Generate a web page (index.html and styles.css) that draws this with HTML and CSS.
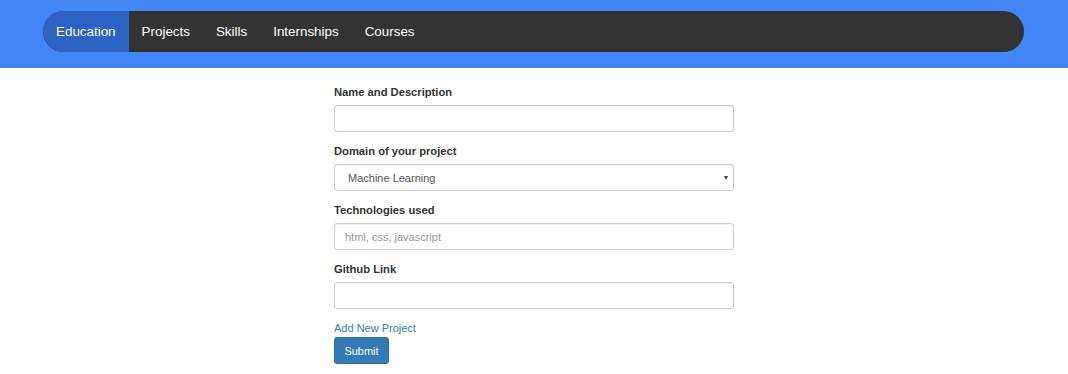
FILE: index.html
```html
<!DOCTYPE html>
<html lang="en">
<head>
    <meta charset="UTF-8">
    <meta name="viewport" content="width=device-width, initial-scale=1.0">
    <title>Projects</title>
    <link rel="stylesheet" href="styles.css">
</head>
<body>
    <header class="top">
        <nav class="navbar">
            <a class="nav-item active" href="#">Education</a>
            <a class="nav-item" href="#">Projects</a>
            <a class="nav-item" href="#">Skills</a>
            <a class="nav-item" href="#">Internships</a>
            <a class="nav-item" href="#">Courses</a>
        </nav>
    </header>
    <form class="project-form">
        <div class="form-group">
            <label for="name">Name and Description</label>
            <input type="text" id="name" class="form-control">
        </div>
        <div class="form-group">
            <label for="domain">Domain of your project</label>
            <div class="select-wrap">
                <select id="domain" class="form-control select">
                    <option>Machine Learning</option>
                    <option>Web Development</option>
                    <option>Android</option>
                </select>
                <span class="caret"></span>
            </div>
        </div>
        <div class="form-group">
            <label for="tech">Technologies used</label>
            <input type="text" id="tech" class="form-control" placeholder="html, css, javascript">
        </div>
        <div class="form-group">
            <label for="github">Github Link</label>
            <input type="text" id="github" class="form-control">
        </div>
        <a class="add-link" href="#">Add New Project</a>
        <button type="submit" class="btn">Submit</button>
    </form>
</body>
</html>
```

FILE: styles.css
```css
body {
    margin: 0;
    font-family: "Liberation Sans", Arial, sans-serif;
    background-color: white;
    color: #333;
}
.top {
    background-color: #4285f4;
    padding: 11px 44px 16px 43px;
}
.navbar {
    display: flex;
    height: 41px;
    background-color: #333;
    border-radius: 21px;
    overflow: hidden;
}
.nav-item {
    display: flex;
    align-items: center;
    padding: 0 13px;
    font-size: 13.4px;
    color: white;
    text-decoration: none;
}
.nav-item.active {
    background-color: #2b63c3;
}
.project-form {
    width: 400px;
    margin: 17px auto 0;
    display: flex;
    flex-direction: column;
    align-items: flex-start;
}
.form-group {
    width: 100%;
    margin-bottom: 12px;
}
label {
    display: block;
    font-size: 11.2px;
    font-weight: bold;
    line-height: 14px;
    margin-bottom: 6px;
    color: #333;
}
.form-control {
    display: block;
    box-sizing: border-box;
    width: 100%;
    height: 27px;
    margin: 0;
    padding: 0 10px;
    border: 1px solid #ccc;
    border-radius: 3px;
    font-family: "Liberation Sans", Arial, sans-serif;
    font-size: 11px;
    color: #555;
    background-color: white;
    box-shadow: inset 0 1px 1px rgba(0, 0, 0, 0.06);
}
.form-control::placeholder {
    color: #999;
}
.select-wrap {
    position: relative;
}
.select {
    appearance: none;
    -webkit-appearance: none;
    padding-left: 13px;
}
.caret {
    position: absolute;
    right: 6px;
    top: 12px;
    border-left: 2.5px solid transparent;
    border-right: 2.5px solid transparent;
    border-top: 4px solid #444;
}
.add-link {
    font-size: 11px;
    line-height: 14px;
    color: #337ab7;
    text-decoration: none;
}
.btn {
    margin-top: 2px;
    height: 27px;
    width: 55px;
    padding: 0;
    border: 1px solid #2e6da4;
    border-radius: 3px;
    background-color: #337ab7;
    color: white;
    font-family: "Liberation Sans", Arial, sans-serif;
    font-size: 11px;
}
```
